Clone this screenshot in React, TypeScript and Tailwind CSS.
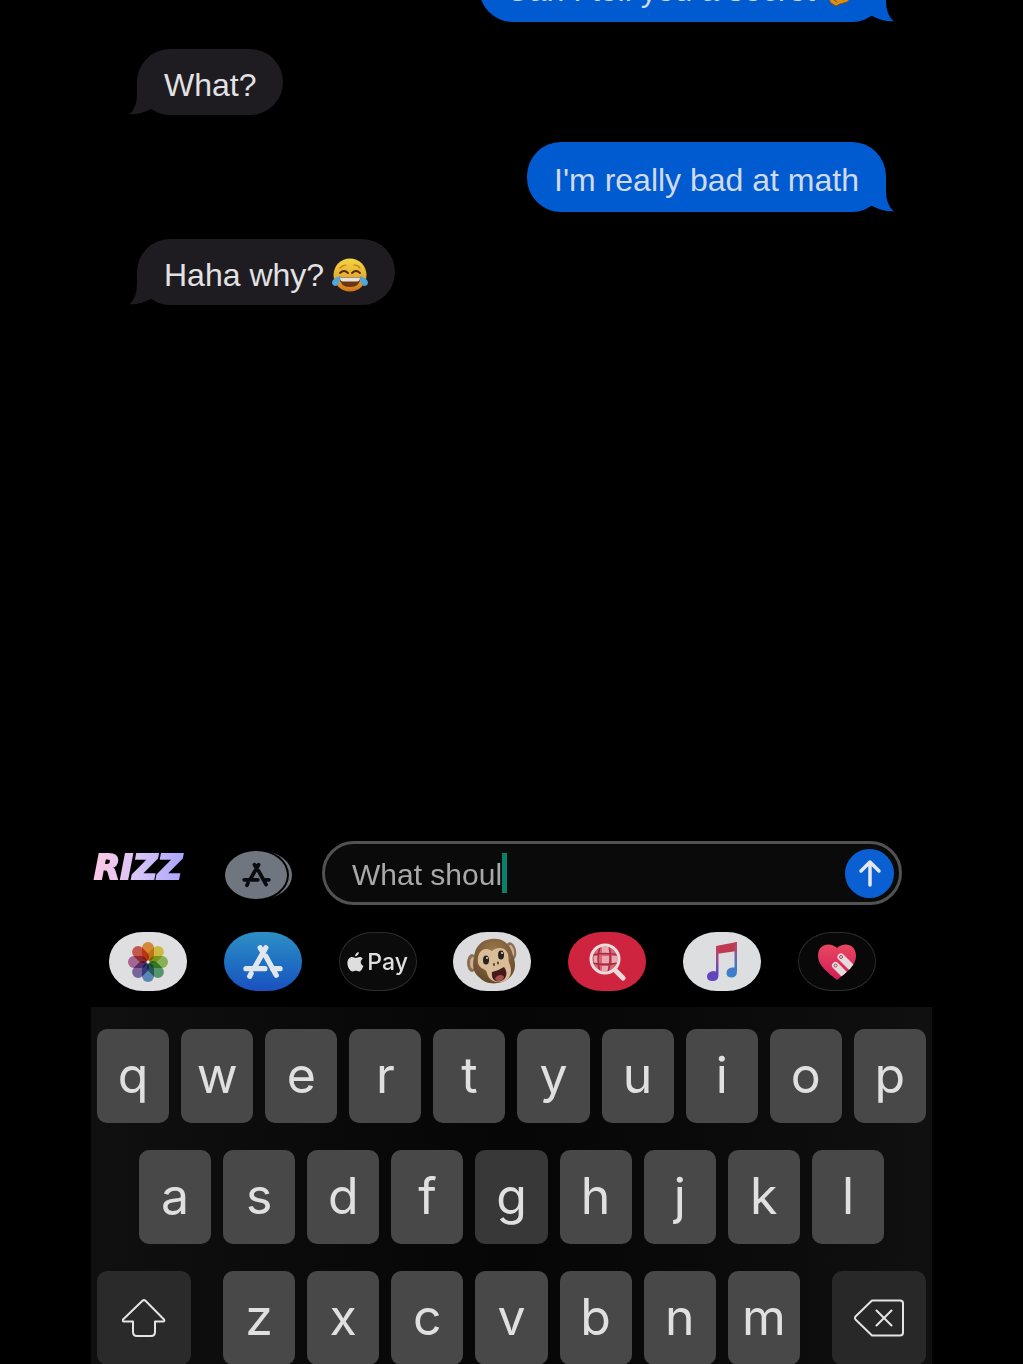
import { clsx } from 'clsx';
import type { ReactNode } from 'react';

type Message = {
  id: number;
  text: string;
  mine?: boolean;
  emoji?: ReactNode;
};

function HushEmoji() {
  return (
    <svg viewBox="0 0 36 36" className="ml-2 size-9 shrink-0" role="img" aria-label="shushing face">
      <circle cx="18" cy="15" r="15" fill="#e0a42c" />
      <circle cx="12" cy="11" r="2" fill="#4a2c0c" />
      <circle cx="24" cy="11" r="2" fill="#4a2c0c" />
      <path d="M8 31c-3-4-2-9 1-11l3-8c1-2 4-1 3 2l-1 5 10 5c3 2 3 4 0 6l-7 2-4 2z" fill="#d8921c" stroke="#8a4e08" />
      <path d="m11 28 3 2M17 26l3 2" stroke="#8a4e08" strokeLinecap="round" />
    </svg>
  );
}

function JoyEmoji() {
  return (
    <svg viewBox="0 0 36 36" className="ml-2 size-9 shrink-0" role="img" aria-label="face with tears of joy">
      <defs>
        <linearGradient id="joy" x1="0" y1="0" x2="0" y2="1">
          <stop offset="0" stopColor="#f2d544" />
          <stop offset="0.6" stopColor="#e8a92c" />
          <stop offset="1" stopColor="#cf7418" />
        </linearGradient>
      </defs>
      <circle cx="18" cy="18" r="16.500" fill="url(#joy)" />
      <path d="M8 11q3-3 6-3M22 8q4 0 6 3" fill="none" stroke="#b87a20" strokeWidth="1.2" strokeLinecap="round" />
      <path d="M8 16q4-4 8 0M20 16q4-4 8 0" fill="none" stroke="#4e2c0e" strokeWidth="1.8" strokeLinecap="round" />
      <path d="M7 20h22q-1 10-11 10T7 20z" fill="#6b3414" />
      <path d="M8 20.500h20q0 4-3 4H11q-3 0-3-4z" fill="#e6e2d8" />
      <path d="M8 19q-7 2-8 6 0 4 4 4 4-1 4-10zM28 19q7 2 8 6 0 4-4 4-4-1-4-10z" fill="#4fa6d8" />
    </svg>
  );
}

const messages: Message[] = [
  { id: 1, text: 'Can I tell you a secret', mine: true, emoji: <HushEmoji /> },
  { id: 2, text: 'What?' },
  { id: 3, text: "I'm really bad at math", mine: true },
  { id: 4, text: 'Haha why?', emoji: <JoyEmoji /> },
];

function Bubble({ message }: { message: Message }) {
  const { text, mine, emoji } = message;
  return (
    <li
      className={clsx(
        'relative flex items-center rounded-[34px] px-[27px] pt-[6px] text-[32px] leading-10 whitespace-nowrap',
        mine ? 'h-[70px] self-end bg-[#005bd0] text-[#d0daea]' : 'h-[66px] self-start bg-[#1e1c21] text-[#e2e2e4]',
      )}
    >
      <span>{text}</span>
      {emoji}
      <svg
        viewBox="0 0 32 34"
        className={clsx('absolute bottom-0 h-[34px] w-8', mine ? '-right-2 text-[#005bd0]' : '-left-2 -scale-x-100 text-[#1e1c21]')}
        aria-hidden="true"
      >
        <path d="M24 0v13q0 14 8 20.500Q20 33.500 10 28L2 22V0z" fill="currentColor" />
        <path d="M0 34q6-1 10-5.500Q18 33 32 34z" fill="#000" />
      </svg>
    </li>
  );
}

function AppStoreMark({ className }: { className?: string }) {
  return (
    <svg viewBox="0 0 42 38" className={className} fill="none" stroke="currentColor" strokeWidth="5.500" strokeLinecap="round" aria-hidden="true">
      <path d="M24 4 12 25M18 4l3 5M24 13l11 20M3 26h20M31 26h8M8.500 31 7 34" />
    </svg>
  );
}

const petals = [
  { angle: 0, fill: '#f08a1c' },
  { angle: 45, fill: '#e2cf2c' },
  { angle: 90, fill: '#8cbf45' },
  { angle: 135, fill: '#459b62' },
  { angle: 180, fill: '#4c86c4' },
  { angle: 225, fill: '#7458a4' },
  { angle: 270, fill: '#b05c98' },
  { angle: 315, fill: '#dc4838' },
];

function PhotosIcon() {
  return (
    <svg viewBox="0 0 40 40" className="size-10" aria-hidden="true">
      {petals.map(({ angle, fill }) => (
        <rect
          key={angle}
          x="14"
          y="0"
          width="12"
          height="19"
          rx="6"
          fill={fill}
          fillOpacity="0.85"
          transform={`rotate(${angle} 20 20)`}
          className="mix-blend-multiply"
        />
      ))}
      <circle cx="20" cy="20" r="1.500" fill="#eee" />
    </svg>
  );
}

function ApplePay() {
  return (
    <span className="flex items-center gap-[3px] font-['Inter',sans-serif] text-[#dedede]">
      <svg viewBox="0 0 17 20" className="h-5 w-[17px]" fill="currentColor" aria-hidden="true">
        <path d="M11.800 0c.2 2.300-1.700 4.300-3.700 4.300C7.900 2.200 9.700.2 11.800 0z" />
        <path d="M15.800 6.800c-3.100 1.900-2.500 5.800.6 7.100-.8 2.200-2.500 5.600-4.400 5.600-1.200 0-1.700-.7-3.100-.7s-2 .7-3.100.7C3 19.500.4 15 .4 11.300.4 7.600 2.600 5.100 5.200 5.100c1.500 0 2.600.8 3.600.8 1 0 2.200-.9 4-.9 1.200 0 2.300.6 3 1.800z" />
      </svg>
      <span className="text-[23px] leading-8 font-medium">Pay</span>
    </span>
  );
}

function MonkeyIcon() {
  return (
    <svg viewBox="0 0 52 50" className="h-[50px] w-[52px]" aria-hidden="true">
      <defs>
        <radialGradient id="fur" cx="0.5" cy="0.3" r="0.7">
          <stop offset="0" stopColor="#9c7a4c" />
          <stop offset="1" stopColor="#65482c" />
        </radialGradient>
      </defs>
      <ellipse cx="6" cy="26" rx="5" ry="9" fill="#8a7052" />
      <ellipse cx="7" cy="26" rx="3" ry="6" fill="#cfae98" />
      <ellipse cx="45" cy="14" rx="5" ry="9" fill="#8a7052" transform="rotate(-12 45 14)" />
      <ellipse cx="45" cy="14" rx="3" ry="6" fill="#cfae98" transform="rotate(-12 45 14)" />
      <path d="M25 2c11-2 20 5 22 17 4 9 2 18-5 23-8 6-22 6-28-1C7 36 6 29 8 20 9 10 15 3 25 2z" fill="url(#fur)" />
      <path d="M26 14c5-5 14-4 16 3 1 4 0 7 2 11 3 9-1 16-9 17-7 1-13-3-14-9-1-5-7-3-9-10-1-7 2-14 8-14 3 0 4 1 6 2z" fill="#d9bd98" />
      <ellipse cx="20" cy="23" rx="3" ry="4.500" fill="#2b211c" />
      <ellipse cx="35" cy="18" rx="3" ry="4.500" fill="#2b211c" />
      <circle cx="21" cy="21" r="1" fill="#ddd" />
      <circle cx="36" cy="16" r="1" fill="#ddd" />
      <path d="M28 27v1M32 25.500v1" stroke="#5f4630" strokeWidth="2" strokeLinecap="round" />
      <path d="M26 35c5-1 8-3 12-5 4 5 3 12-3 14-6 2-10-2-9-9z" fill="#45191a" />
      <path d="M29 42c2-5 8-5 9-2-1 4-6 6-9 2z" fill="#a3524e" />
    </svg>
  );
}

function ImagesIcon() {
  return (
    <svg viewBox="0 0 38 38" className="size-[38px]" fill="none" aria-hidden="true">
      <circle cx="17" cy="16" r="14" fill="#dc6173" />
      <path d="M14 13h7v7h-7zM6 13h5v7H6zM14 4h7v6h-7zM24 13h5v7h-5zM14 23h6v5h-6z" fill="#e9a9b0" />
      <path d="M12 4q-4 12 0 25M21 3q3 13-1 26M4 12q13-3 26 0M4 20q13 3 26 0" stroke="#a32c40" strokeWidth="1.500" />
      <circle cx="17" cy="16" r="14" stroke="#eadcdc" strokeWidth="3" />
      <path d="m27 27 8 8" stroke="#eadcdc" strokeWidth="5" strokeLinecap="round" />
    </svg>
  );
}

function MusicIcon() {
  return (
    <svg viewBox="0 0 32 40" className="h-10 w-8" aria-hidden="true">
      <defs>
        <linearGradient id="music" x1="0" y1="0" x2="0" y2="1">
          <stop offset="0" stopColor="#cf3d55" />
          <stop offset="0.45" stopColor="#8f4a9c" />
          <stop offset="0.8" stopColor="#6144c0" />
        </linearGradient>
        <linearGradient id="music-right" x1="0" y1="0" x2="0" y2="1">
          <stop offset="0" stopColor="#cf3d55" />
          <stop offset="0.5" stopColor="#5b6dbb" />
          <stop offset="1" stopColor="#3283ce" />
        </linearGradient>
      </defs>
      <path d="M10 4 31 0v9l-21 3z" fill="#bf3a50" />
      <path d="M10 4h2.500v29q0 6-6 6Q1 39 1 34.500T7 29q2 0 3 .5z" fill="url(#music)" />
      <path d="M28.500.4 31 0v29q0 6-5 6.500-5.500 0-5.500-4.500t5-5.500h3z" fill="url(#music-right)" />
    </svg>
  );
}

function HeartIcon() {
  return (
    <svg viewBox="0 0 40 36" className="h-9 w-10" aria-hidden="true">
      <defs>
        <linearGradient id="heart" x1="0" y1="0" x2="0" y2="1">
          <stop offset="0" stopColor="#e8475f" />
          <stop offset="1" stopColor="#d31d58" />
        </linearGradient>
        <clipPath id="heart-clip">
          <path d="M20 4C14-2 1-1 1 12c0 9 9 16 19 24 10-8 19-15 19-24C39-1 26-2 20 4z" />
        </clipPath>
      </defs>
      <path d="M20 4C14-2 1-1 1 12c0 9 9 16 19 24 10-8 19-15 19-24C39-1 26-2 20 4z" fill="url(#heart)" />
      <g clipPath="url(#heart-clip)">
        <path d="m18.500 21.500 12 12M24 13l14 14" stroke="#e6dadd" strokeWidth="7" strokeLinecap="round" />
      </g>
      <circle cx="18.500" cy="21.500" r="1.500" fill="none" stroke="#a8475c" />
      <circle cx="24" cy="13" r="1.500" fill="none" stroke="#a8475c" />
    </svg>
  );
}

const apps = [
  { name: 'Photos', icon: <PhotosIcon />, style: 'bg-[#dfdfe1]' },
  { name: 'App Store', icon: <AppStoreMark className="h-9 w-10 text-[#dfe7ec]" />, style: 'bg-linear-to-b from-[#2f8fc4] to-[#1b50bf]' },
  { name: 'Apple Pay', icon: <ApplePay />, style: 'border border-[#2c2c2c] bg-[#0b0b0b]' },
  { name: 'Memoji', icon: <MonkeyIcon />, style: 'bg-[#dcdcde]' },
  { name: 'Images', icon: <ImagesIcon />, style: 'bg-[#cf2440]' },
  { name: 'Music', icon: <MusicIcon />, style: 'bg-[#dcdee0]' },
  { name: 'Digital Touch', icon: <HeartIcon />, style: 'border border-[#2c2c2c] bg-[#080808]' },
];

function Composer() {
  return (
    <form className="flex h-16 items-center" onSubmit={(e) => e.preventDefault()}>
      <strong className="w-[134px] bg-linear-to-r from-[#ffc8e4] via-[#d8c4f8] via-35% to-[#a9a4fc] to-70% bg-clip-text pb-3 pl-[3px] font-['DejaVu_Sans'] text-[34px] leading-8 font-bold text-transparent italic [-webkit-text-stroke:2px_transparent]">
        RIZZ
      </strong>
      <button type="button" aria-label="Apps" className="relative mt-1 h-12 w-[67px]">
        <span className="absolute top-0 right-0 h-12 w-[62px] rounded-[31px/24px] bg-[#6f747c]" />
        <span className="absolute top-0 left-0 flex h-12 w-[62px] items-center justify-center rounded-[31px/24px] bg-[#6f7680] ring-2 ring-black">
          <AppStoreMark className="h-[26px] w-[29px] text-[#090b0e]" />
        </span>
      </button>
      <div className="mx-[30px] flex h-16 min-w-0 flex-1 items-center rounded-full border-3 border-[#525252] bg-[#0a0a0a] pr-[5px] pl-[27px]">
        <label htmlFor="message" className="sr-only">
          Message
        </label>
        <input
          id="message"
          defaultValue="What shoul"
          className="h-11 max-w-full min-w-0 bg-transparent pt-1 text-[30px] leading-10 text-[#a8a8a8] outline-none [field-sizing:content]"
        />
        <span className="h-10 w-[5px] shrink-0 bg-[#0c8066]" />
        <button type="submit" aria-label="Send" className="ml-auto flex size-[49px] shrink-0 items-center justify-center rounded-full bg-[#0a60d2]">
          <svg viewBox="0 0 24 28" className="h-7 w-6" fill="none" stroke="#e4e8ee" strokeWidth="3.500" strokeLinecap="round" strokeLinejoin="round" aria-hidden="true">
            <path d="M12 26V3M3 12l9-9 9 9" />
          </svg>
        </button>
      </div>
    </form>
  );
}

function Key({ children, dim }: { children: string; dim?: boolean }) {
  return (
    <button
      type="button"
      className={clsx(
        "h-[94px] min-w-0 flex-1 rounded-[10px] pb-[2px] font-['Inter',sans-serif] text-[50px] leading-none text-[#e0e0e0]",
        dim ? 'bg-[#383838]' : 'bg-[#484848]',
      )}
    >
      {children}
    </button>
  );
}

function Keyboard() {
  return (
    <section aria-label="Keyboard" className="-mb-px flex shrink-0 flex-col gap-[27px] bg-linear-to-r from-[#101010] via-[#060606] to-[#101010] px-[6px] pt-[22px]">
      <div className="flex gap-3">
        {[...'qwertyuiop'].map((k) => (
          <Key key={k}>{k}</Key>
        ))}
      </div>
      <div className="flex gap-3 px-[42px]">
        {[...'asdfghjkl'].map((k) => (
          <Key key={k} dim={k === 'g'}>
            {k}
          </Key>
        ))}
      </div>
      <div className="flex gap-8">
        <button type="button" aria-label="Shift" className="flex h-[94px] w-[94px] items-center justify-center rounded-[10px] bg-[#2a2a2a]">
          <svg viewBox="0 0 44 38" className="h-[38px] w-11" fill="none" stroke="#e4e4e4" strokeWidth="2" strokeLinejoin="round" aria-hidden="true">
            <path d="M20.500 1.800q1.500-1.300 3 0L42 20.500q1 2-1 2h-8V33q0 4-4 4H15q-4 0-4-4V22.500H2q-2 0-1-2z" />
          </svg>
        </button>
        <div className="flex min-w-0 flex-1 gap-3">
          {[...'zxcvbnm'].map((k) => (
            <Key key={k}>{k}</Key>
          ))}
        </div>
        <button type="button" aria-label="Delete" className="flex h-[94px] w-[94px] items-center justify-center rounded-[10px] bg-[#282828]">
          <svg viewBox="0 0 50 38" className="h-[38px] w-[50px]" fill="none" stroke="#e4e4e4" strokeWidth="2" strokeLinecap="round" strokeLinejoin="round" aria-hidden="true">
            <path d="M18 1.500h28q3 0 3 3v29q0 3-3 3H18L1.500 20.500q-1-1.500 0-3zM22.500 11.500l15 15M37.500 11.500l-15 15" />
          </svg>
        </button>
      </div>
    </section>
  );
}

export default function App() {
  return (
    <div className="h-screen overflow-hidden bg-black font-['Liberation_Sans',Arial,sans-serif]">
      <main className="mx-auto flex h-full w-full max-w-[841px] flex-col">
        <ol className="-mt-12 flex min-h-0 flex-1 flex-col gap-[27px] px-[46px]">
          {messages.map((m) => (
            <Bubble key={m.id} message={m} />
          ))}
        </ol>
        <Composer />
        <nav aria-label="iMessage apps" className="flex justify-between pt-[27px] pr-14 pb-4 pl-[18px]">
          {apps.map(({ name, icon, style }) => (
            <button
              key={name}
              type="button"
              aria-label={name}
              className={clsx('flex h-[59px] w-[78px] items-center justify-center rounded-[34px/29px]', style)}
            >
              {icon}
            </button>
          ))}
        </nav>
        <Keyboard />
      </main>
    </div>
  );
}
